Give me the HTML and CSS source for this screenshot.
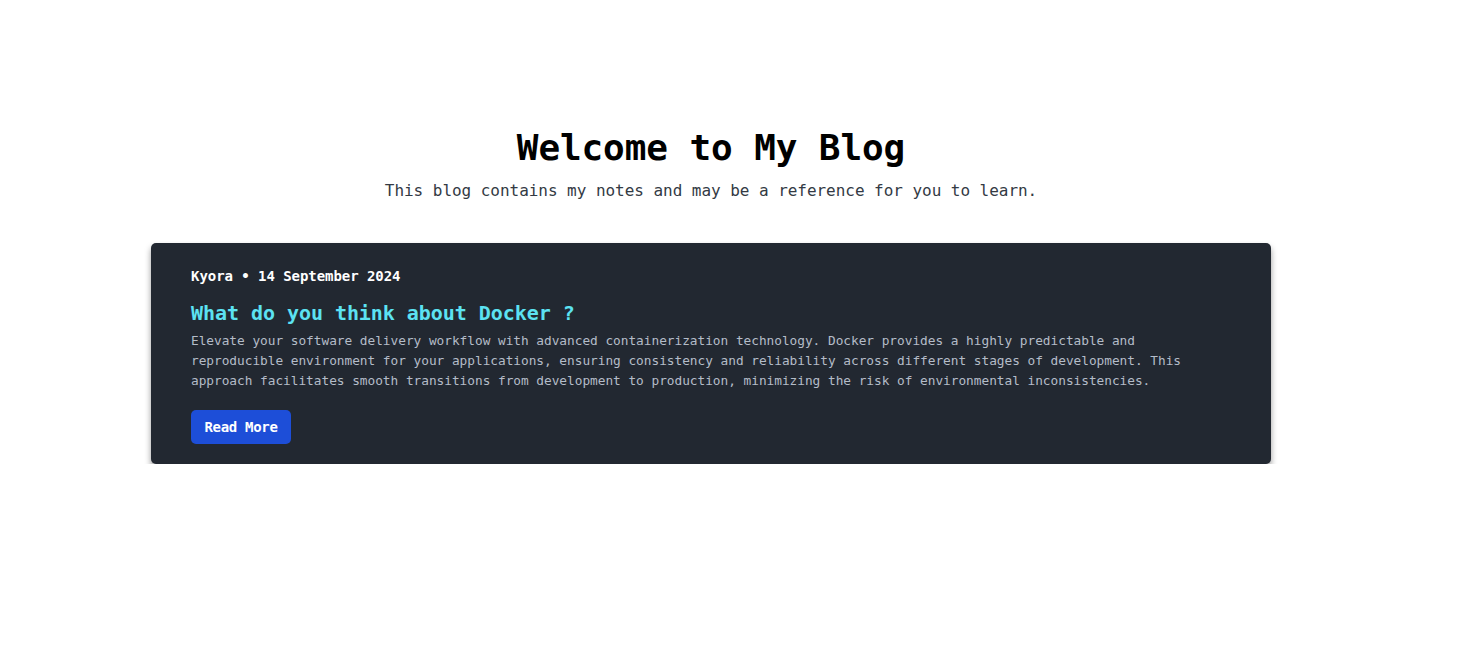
FILE: index.html
```html
<!DOCTYPE html>
<html lang="en">
<head>
<meta charset="utf-8">
<title>My Blog</title>
<link rel="stylesheet" href="styles.css">
</head>
<body>
<main class="page">
  <header class="hero">
    <h1 class="hero-title">Welcome to My Blog</h1>
    <p class="hero-sub">This blog contains my notes and may be a reference for you to learn.</p>
  </header>
  <section class="posts">
    <article class="card">
      <p class="card-meta">Kyora • 14 September 2024</p>
      <h2 class="card-title">What do you think about Docker ?</h2>
      <p class="card-text">Elevate your software delivery workflow with advanced containerization technology. Docker provides a highly predictable and reproducible environment for your applications, ensuring consistency and reliability across different stages of development. This approach facilitates smooth transitions from development to production, minimizing the risk of environmental inconsistencies.</p>
      <a class="btn" href="#">Read More</a>
    </article>
  </section>
</main>
</body>
</html>
```
FILE: styles.css
```css
* { box-sizing: border-box; }
html, body { margin: 0; padding: 0; background: #ffffff; }
body {
  font-family: "DejaVu Sans Mono", "Liberation Mono", monospace;
  color: #000;
}
.page {
  width: 1422px;
  padding-top: 126px;
  display: flex;
  flex-direction: column;
  align-items: center;
}
.hero { text-align: center; }
.hero-title {
  margin: 0;
  font-size: 36px;
  line-height: 44px;
  font-weight: 700;
  letter-spacing: -0.1px;
}
.hero-sub {
  margin: 9px 0 0;
  font-size: 16px;
  line-height: 24px;
  color: #333a44;
  letter-spacing: -0.04px;
}
.posts {
  width: 1120px;
  margin-top: 40px;
}
.card {
  background: #222831;
  border-radius: 5px;
  padding: 24px 40px 20px;
  box-shadow: 0 4px 6px rgba(0, 0, 0, 0.4);
}
.card-meta {
  margin: 0;
  font-size: 14px;
  line-height: 18px;
  font-weight: 700;
  color: #ffffff;
  letter-spacing: -0.05px;
}
.card-title {
  margin: 14px 0 0;
  font-size: 20px;
  line-height: 28px;
  font-weight: 700;
  color: #5ce2f2;
  letter-spacing: -0.05px;
}
.card-text {
  margin: 4px 0 0;
  font-size: 12.8px;
  line-height: 20px;
  color: #b4bcc8;
  letter-spacing: -0.03px;
}
.btn {
  display: inline-block;
  margin-top: 19px;
  width: 100px;
  height: 34px;
  line-height: 34px;
  text-align: center;
  background: #1d4ed8;
  color: #ffffff;
  border-radius: 5px;
  font-size: 14px;
  font-weight: 700;
  text-decoration: none;
  letter-spacing: -0.3px;
}
```
